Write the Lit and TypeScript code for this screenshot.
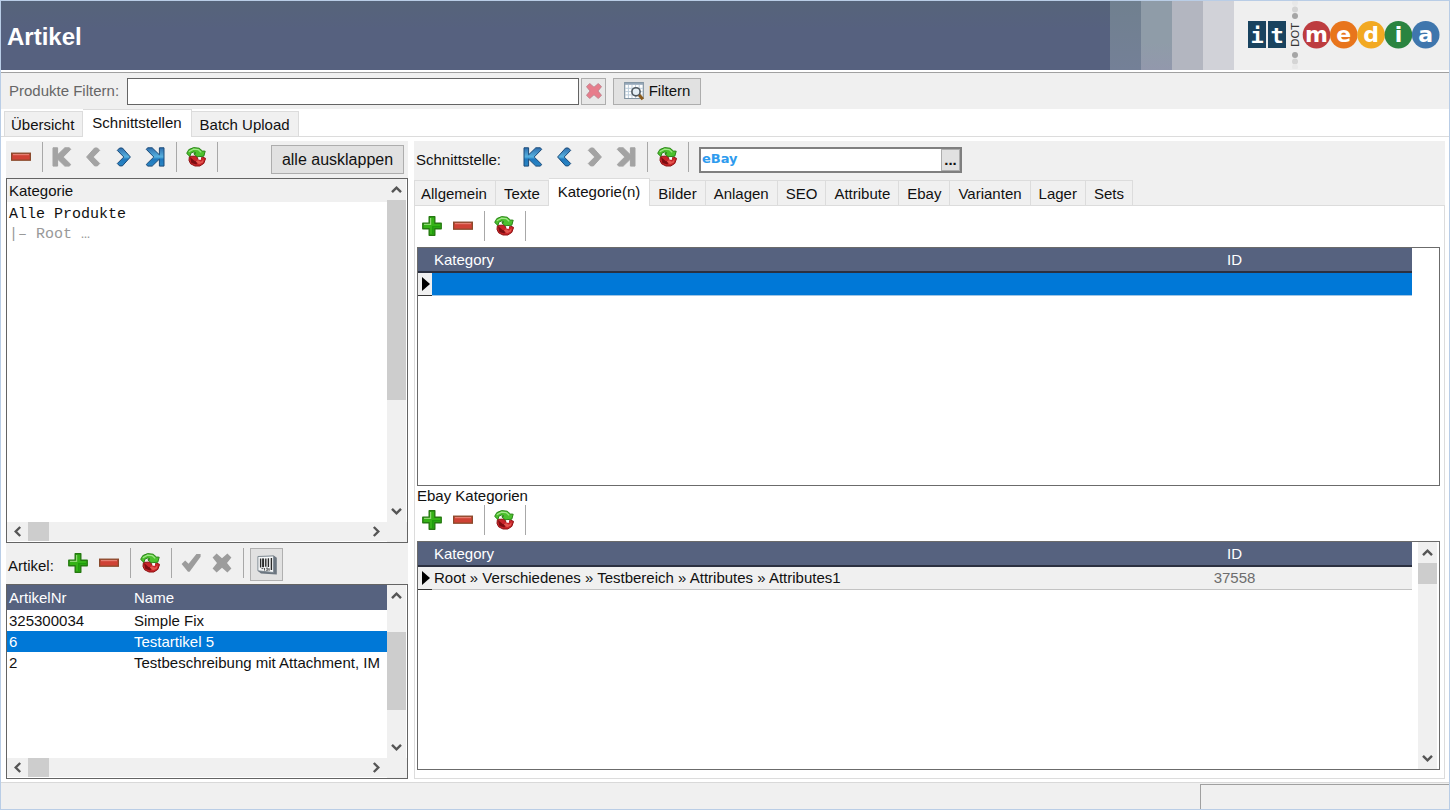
import { LitElement, html, svg, css, TemplateResult } from "lit";
import { customElement, property, state } from "lit/decorators.js";
import { classMap } from "lit/directives/class-map.js";

const icons: Record<string, TemplateResult> = {
  plus: svg`
    <path d="M7.2.8h5.6v6.4h6.4v5.6h-6.4v6.4H7.2v-6.4H.8V7.2h6.4z" fill="#35b317" stroke="#257a10" stroke-width="1.4" stroke-linejoin="round"/>
    <path d="M8.6 2v6.4H2" fill="none" stroke="#8fd873" stroke-width="1.2"/>
    <path d="M10 10h8v1.6h-6.3V18H10z" fill="#1f9d0c"/>`,
  minus: svg`
    <rect x=".6" y="6.2" width="18.8" height="7" fill="#cf4235" stroke="#8a4a2c" stroke-width="1.3"/>
    <path d="M2 7.6h16" stroke="#e57f72" stroke-width="1.2"/>`,
  first: svg`
    <path d="M1 .8h4.6v7L12.8.8h4.6l1.3 1.6L11.2 10l7.5 7.4-1.3 1.7h-4.6l-7.2-7v7H1z" class="nav"/>`,
  prev: svg`<path d="M11.6 1h2.8l2.3 2.4L10.2 10l6.5 6.5-2.3 2.4h-2.8L3.6 10z" class="nav"/>`,
  next: svg`<path d="M8.4 1H5.6L3.3 3.4 9.8 10l-6.5 6.5 2.3 2.4h2.8L16.4 10z" class="nav"/>`,
  last: svg`
    <path d="M19 .8h-4.6v7L7.2.8H2.6L1.3 2.4 8.8 10l-7.5 7.4 1.3 1.7h4.6l7.2-7v7H19z" class="nav"/>`,
  refresh: svg`
    <path d="M3.4 9.4 3 13.4l1.6 3.4 4.4 2.2h4.8l4-2.6 1.8-5-3-1.4-2.8 2.2-2.6-.8V9z" fill="#c8252a" stroke="#8d1212" stroke-linejoin="round"/>
    <path d="m4 10 4.6 4 3.4.2-1.6 3.4-5-1.6z" fill="#7d0c10"/>
    <path d="m9.6 14.4 2.4-1.2 3 1.6 2.6-2.6-.6 3.4-4 1.6z" fill="#e4564f"/>
    <path d="M.7 6.4 2.8 2.6 7.6.6l5.6.6L16.4 4l2.8.2-1.4 5-6.6.6-3.4-3 2.2-.8-2.2-1-2.6.8-1.4 3.6z" fill="#4cc12e" stroke="#2a8417" stroke-linejoin="round"/>
    <path d="m2.8 4.8 4.8-2.6 4.6.4 3 2.8" fill="none" stroke="#a2e68a" stroke-width="1.2"/>
    <path d="M12 10.6h3v2.2h-2.4z" fill="#fff"/>`,
  check: svg`<path d="m.6 11 3.6-3.6 3.4 3.4L15.4.9h4.2v2.8L8.6 18.8H7z" fill="#9c9c9c"/>`,
  cross: svg`<path d="M4.6.6 10 5.2 15.4.6l4 4L15 10l4.4 5.4-4 4L10 14.8l-5.4 4.6-4-4L5 10 .6 4.6z" class="x" stroke-linejoin="round"/>`,
  barcode: svg`
    <path d="M1 1.6 17 .8l2.8 2v16.6L4 18.6 1 16z" fill="#6c7680"/>
    <path d="M.9 1.5 16.6.9v16.6L.9 15.8z" fill="#f6f8f9" stroke="#78838c" stroke-width=".9"/>
    <path d="M3.6 3.4v9M8.8 3.4v8.4M11.4 3.3v8.6M14.4 3v12" stroke="#2a2a2a" stroke-width="1.4"/>
    <path d="M6.1 3.4v8.8" stroke="#2a2a2a" stroke-width="2"/>
    <path d="M4.5 13.6h1.8m1.2-.6v2.6m1.4-2.4h2v2h-2m3.2-2v2.6" stroke="#555" fill="none"/>`,
  table: svg`
    <path d="M.7 1.5h18.6v16H.7z" fill="#fff" stroke="#8293a1" stroke-width="1.2"/>
    <path d="M1 2.8h18" stroke="#93a6b8" stroke-width="2"/>
    <path d="M4.4 4v13M8 4v13M11.6 4v13M15.2 4v13M1 7.3h18M1 10.6h18M1 13.9h18" stroke="#bccddb"/>
    <circle cx="12" cy="10.8" r="4.1" fill="#e4eef5" stroke="#4d565e" stroke-width="1.6"/>
    <path d="m15.2 14 3.6 4.2" stroke="#8b5a1b" stroke-width="3"/>`,
};

const chevrons: Record<string, string> = {
  up: "M1 8.2 5.5 3.7 10 8.2",
  down: "M1 2.8 5.5 7.3 10 2.8",
  left: "M8.2 1 3.7 5.5 8.2 10",
  right: "M2.8 1 7.3 5.5 2.8 10",
};

const base = css`
  * { box-sizing: border-box; }
  button, input { font: inherit; color: inherit; margin: 0; padding: 0; border: 0; border-radius: 0; background: none; outline: none; }
`;

@customElement("ui-icon")
class UiIcon extends LitElement {
  @property() name = "plus";
  @property({ reflect: true }) tone = "normal";
  static styles = css`
    :host { display: block; width: 20px; height: 20px; }
    svg { display: block; width: 20px; height: 20px; }
    .nav { fill: url(#blue); stroke: #1b4a78; stroke-width: 1; stroke-linejoin: round; }
    :host([tone="off"]) .nav { fill: #a3a3a3; stroke: #a3a3a3; stroke-width: 1; }
    .x { fill: #9c9c9c; }
    :host([tone="red"]) .x { fill: #e77d8c; stroke: #b8808a; stroke-width: 1; }
    :host([tone="red"]), :host([tone="red"]) svg { width: 16px; height: 16px; }
  `;
  render() {
    return html`<svg viewBox="0 0 20 20" aria-hidden="true">
      <defs>
        <linearGradient id="blue" x1="0" y1="0" x2="0" y2="1">
          <stop offset="0" stop-color="#2f6fae" /><stop offset=".5" stop-color="#57b2e0" /><stop offset=".62" stop-color="#1f78bd" /><stop offset="1" stop-color="#2b86c4" />
        </linearGradient>
      </defs>
      ${icons[this.name]}
    </svg>`;
  }
}

@customElement("tool-strip")
class ToolStrip extends LitElement {
  /** Icon names in order; "|" is a separator, a leading "-" disables the button. */
  @property() items = "";
  static styles = [base, css`
    :host { display: flex; height: 30px; }
    button { width: 31px; height: 30px; display: grid; place-items: center start; padding-left: 5px; }
    .sep { width: 10px; display: flex; justify-content: center; }
    .sep::before { content: ""; width: 1px; background: #a8a8a8; }
  `];
  private labels: Record<string, string> = {
    plus: "Hinzufügen", minus: "Löschen", first: "Erster", prev: "Zurück", next: "Weiter",
    last: "Letzter", refresh: "Aktualisieren", check: "Speichern", cross: "Abbrechen",
  };
  render() {
    return this.items.split(" ").map((item) => {
      if (item === "|") return html`<span class="sep"></span>`;
      const off = item.startsWith("-");
      const name = off ? item.slice(1) : item;
      return html`<button ?disabled=${off} aria-label=${this.labels[name]}>
        <ui-icon name=${name} tone=${off ? "off" : "normal"}></ui-icon>
      </button>`;
    });
  }
}

@customElement("scroll-track")
class ScrollTrack extends LitElement {
  @property({ reflect: true }) axis = "y";
  @property({ type: Number }) offset = 0;
  @property({ type: Number }) size = 20;
  static styles = [base, css`
    :host { display: flex; background: #f0f0f0; }
    :host([axis="y"]) { flex-direction: column; width: 19px; }
    :host([axis="x"]) { height: 19px; }
    button { flex: none; width: 21px; height: 19px; display: grid; place-items: center; }
    :host([axis="y"]) button { width: 19px; height: 21px; }
    svg { width: 11px; height: 11px; fill: none; stroke: #555; stroke-width: 2.4; }
    .track { flex: 1; min-width: 0; min-height: 0; }
    .thumb { background: #cdcdcd; width: 100%; height: 100%; }
  `];
  private arrow(dir: string) {
    return html`<button aria-label=${dir}><svg viewBox="0 0 11 11"><path d=${chevrons[dir]} /></svg></button>`;
  }
  render() {
    const y = this.axis === "y";
    const pos = y
      ? `margin-top:${this.offset}px;height:${this.size}px`
      : `margin-left:${this.offset}px;width:${this.size}px`;
    return html`${this.arrow(y ? "up" : "left")}
      <div class="track"><div class="thumb" style=${pos}></div></div>
      ${this.arrow(y ? "down" : "right")}`;
  }
}

@customElement("tab-row")
class TabRow extends LitElement {
  @property({ attribute: false }) tabs: string[] = [];
  @state() private picked = "";
  @property() selected = "";
  static styles = [base, css`
    :host { display: flex; align-items: flex-end; height: 28px; border-bottom: 1px solid #dcdcdc; }
    button { height: 25px; padding: 2px 8px 0; border: 1px solid #dcdcdc; border-left-width: 0; border-bottom: 0; background: #f0f0f0; white-space: nowrap; }
    button:first-child { border-left-width: 1px; padding-left: 6px; }
    .on { height: 28px; margin-bottom: -1px; padding: 0 9px 2px; background: #fff; }
  `];
  render() {
    const current = this.picked || this.selected;
    return this.tabs.map((t) => html`<button role="tab" aria-selected=${t === current}
      class=${classMap({ on: t === current })} @click=${() => (this.picked = t)}>${t}</button>`);
  }
}

@customElement("category-grid")
class CategoryGrid extends LitElement {
  @property() category = "";
  @property() number = "";
  @property({ type: Boolean }) active = false;
  @property({ type: Boolean }) scroll = false;
  static styles = [base, css`
    :host { display: flex; min-height: 0; background: #fff; border: 1px solid #6b6b6b; }
    .body { flex: 1; min-width: 0; }
    .pad { width: 27px; display: flex; justify-content: flex-end; padding-right: 2px; }
    table { width: 100%; border-collapse: separate; border-spacing: 0; table-layout: fixed; }
    th { height: 25px; padding: 0; font-weight: 400; color: #fff; background: #56627f; border-bottom: 2px solid #2b3040; text-align: left; }
    td { height: 23px; padding: 0; background: #f0f0f0; border-bottom: 1px solid #c3c3c3; white-space: nowrap; }
    .mark { width: 14px; }
    td.mark { border-bottom-color: #333; }
    .mark svg { display: block; width: 14px; height: 16px; }
    .cat { padding-left: 2px; }
    .id { width: 355px; text-align: center; }
    td.id { color: #6d6d6d; }
    .active .cat, .active .id { background: #0078d7; border-bottom-color: #9fc4e4; }
  `];
  render() {
    return html`<div class="body"><table>
        <thead><tr><th class="mark"></th><th class="cat">Kategory</th><th class="id">ID</th></tr></thead>
        <tbody><tr class=${classMap({ active: this.active })}>
          <td class="mark"><svg viewBox="0 0 14 16"><path d="M4 1v14l8-7z" /></svg></td>
          <td class="cat">${this.category}</td><td class="id">${this.number}</td>
        </tr></tbody>
      </table></div>
      <div class="pad">${this.scroll ? html`<scroll-track axis="y" size="21"></scroll-track>` : ""}</div>`;
  }
}

@customElement("brand-logo")
class BrandLogo extends LitElement {
  static styles = css`
    :host { display: block; width: 194px; height: 68px; }
    svg { display: block; }
    .b { font: bold 22px "DejaVu Sans", sans-serif; fill: #fff; text-anchor: middle; }
    .sq { font: bold 22px "DejaVu Sans Mono", monospace; fill: #fff; text-anchor: middle; }
    .dot { font: 11px "DejaVu Sans", sans-serif; fill: #333; text-anchor: middle; }
  `;
  render() {
    const discs = [["m", "#bd3c3f"], ["e", "#e8751c"], ["d", "#f2a922"], ["i", "#2a8440"], ["a", "#3f76ad"]];
    return html`<svg width="194" height="68" viewBox="0 0 194 68" role="img" aria-label="it dot media">
      <path d="M1 20h18v27H1zM21 20h18v27H21z" fill="#19435f" />
      <text class="sq" x="10" y="42">i</text>
      <text class="sq" x="30" y="42">t</text>
      <circle cx="48" cy="2" r="3" fill="#e8e8e8" /><circle cx="48" cy="8.5" r="3" fill="#d4d4d4" /><circle cx="48" cy="15" r="3" fill="#a5a5a5" />
      <text class="dot" transform="translate(52 34) rotate(-90)">DOT</text>
      <circle cx="48" cy="54" r="3" fill="#a5a5a5" /><circle cx="48" cy="60.5" r="3" fill="#d4d4d4" /><circle cx="48" cy="66" r="3" fill="#e8e8e8" />
      ${discs.map(([c, fill], i) => svg`<circle cx=${69.5 + i * 27.3} cy="33.7" r="13.8" fill=${fill} />
        <text class="b" x=${69.5 + i * 27.3} y="41">${c}</text>`)}
    </svg>`;
  }
}

@customElement("app-root")
class AppRoot extends LitElement {
  private articles = [
    ["325300034", "Simple Fix"],
    ["6", "Testartikel 5"],
    ["2", "Testbeschreibung mit Attachment, IM"],
  ];
  @state() private current = "6";

  static styles = [base, css`
    :host { display: flex; flex-direction: column; height: 100vh; box-sizing: border-box; border: 1px solid #b9cde6; background: #fff; color: #111; font: 15px/20px "Liberation Sans", Arial, sans-serif; overflow: hidden; }
    header { display: flex; height: 69px; flex: none; background: #efefef; }
    h1 { flex: 1; margin: 0; padding: 2px 6px 0; display: flex; align-items: center; font-size: 24px; line-height: 28px; color: #fff; background: linear-gradient(#56647a, #56617f 40%); }
    .band { width: 31px; }
    .b1 { background: linear-gradient(#70808f, #748097); }
    .b2 { background: linear-gradient(#8f9ca8 60%, #9298ac); }
    .b3 { background: #b3b6c0; }
    .b4 { background: #d1d2d8; }
    brand-logo { margin: 0 8px 0 13px; }

    .filter { display: flex; align-items: center; gap: 2px; flex: none; height: 37px; margin-top: 2px; padding: 0 8px; border-top: 1px solid #a0a0a0; background: #f0f0f0; }
    .filter label { margin-right: 6px; color: #666; }
    .filter input { width: 452px; height: 27px; padding: 0 4px; background: #fff; border: 1px solid #646464; }
    .btn { display: flex; align-items: center; justify-content: center; gap: 5px; height: 27px; background: #e1e1e1; border: 1px solid #adadad; }
    .clear { width: 25px; background: #e8e8e8; }
    .find { width: 88px; margin-left: 5px; }

    .top-tabs { flex: none; padding-left: 3px; }
    main { flex: 1; min-height: 0; display: flex; gap: 6px; padding: 4px 4px 3px 5px; }
    .left { width: 402px; flex: none; display: flex; flex-direction: column; background: #f0f0f0; }
    .bar { flex: none; display: flex; align-items: center; justify-content: space-between; height: 37px; padding: 0 4px 6px 0; }
    .expand { width: 133px; height: 29px; margin-top: 6px; font-size: 16px; }
    .box { display: grid; grid-template: 1fr 20px / 1fr 20px; background: #fff; border: 1px solid #646464; }
    .box .view { overflow: hidden; }
    .box .corner { background: #f0f0f0; }
    .tree { flex: 1; min-height: 0; }
    .tree h2 { margin: 0 0 2px; height: 23px; padding: 2px 2px 0; font-size: 15px; font-weight: 400; background: #f0f0f0; }
    .tree ul { margin: 0; padding: 1px 2px; list-style: none; font-family: "Liberation Mono", monospace; }
    .tree .sub { color: #999; }
    .art-bar { flex: none; display: flex; height: 41px; padding: 5px 2px 0; }
    .art-label { width: 55px; padding-top: 8px; white-space: nowrap; }
    .code { width: 33px; height: 33px; margin-left: 2px; border-color: #b0b0b0; }
    .list { height: 195px; }
    table { width: 100%; border-collapse: collapse; table-layout: fixed; }
    th { height: 25px; padding: 0 2px; font-weight: 400; text-align: left; background: #56627f; color: #fff; }
    th:first-child { width: 125px; }
    td { height: 21px; padding: 0 0 0 2px; line-height: 21px; white-space: nowrap; }
    .sel td { background: #0078d7; color: #fff; }

    .right { flex: 1; min-width: 0; display: flex; flex-direction: column; background: #f0f0f0; }
    .right .bar { justify-content: flex-start; padding: 0 2px 5px; }
    .lbl { width: 102px; padding-top: 6px; }
    .combo { display: flex; width: 263px; height: 26px; margin: 6px 0 0 6px; background: #fff; border: 2px solid #7f7f7f; }
    .combo input { flex: 1; min-width: 0; padding: 0 1px 3px; font: bold 13px "DejaVu Sans", sans-serif; color: #2e9bee; }
    .combo button { width: 19px; background: #e1e1e1; border: 1px solid #adadad; font-weight: 700; line-height: 14px; }
    .pane { flex: 1; min-height: 0; display: flex; flex-direction: column; padding: 5px 4px 8px 2px; background: #fff; border: 1px solid #dcdcdc; border-top: 0; }
    .g1 { flex: 240 0 0px; margin-top: 6px; }
    .g2 { flex: 229 0 0px; margin-top: 6px; }
    h3 { margin: 0; font-size: 15px; line-height: 19px; font-weight: 400; }
    footer { flex: none; height: 27px; display: flex; justify-content: flex-end; padding-top: 1px; background: #f0f0f0; border-top: 1px solid #d9d9d9; }
    .status { width: 249px; border: solid #a0a0a0; border-width: 1px 0 0 1px; }
  `];

  render() {
    return html`
      <header>
        <h1>Artikel</h1>
        <span class="band b1"></span><span class="band b2"></span><span class="band b3"></span><span class="band b4"></span>
        <brand-logo></brand-logo>
      </header>
      <div class="filter">
        <label for="q">Produkte Filtern:</label>
        <input id="q" type="text" />
        <button class="btn clear" aria-label="Filter löschen"><ui-icon name="cross" tone="red"></ui-icon></button>
        <button class="btn find"><ui-icon name="table"></ui-icon>Filtern</button>
      </div>
      <tab-row class="top-tabs" role="tablist" .tabs=${["Übersicht", "Schnittstellen", "Batch Upload"]} selected="Schnittstellen"></tab-row>
      <main>
        <section class="left">
          <div class="bar">
            <tool-strip items="minus | -first -prev next last | refresh |"></tool-strip>
            <button class="btn expand">alle ausklappen</button>
          </div>
          <div class="box tree">
            <div class="view">
              <h2>Kategorie</h2>
              <ul><li>Alle Produkte</li><li class="sub">|– Root …</li></ul>
            </div>
            <scroll-track axis="y" size="200"></scroll-track>
            <scroll-track axis="x" size="21"></scroll-track>
            <div class="corner"></div>
          </div>
          <div class="art-bar">
            <span class="art-label">Artikel:</span>
            <tool-strip items="plus minus | refresh | -check -cross |"></tool-strip>
            <button class="btn code" aria-label="Barcode"><ui-icon name="barcode"></ui-icon></button>
          </div>
          <div class="box list">
            <div class="view">
              <table>
                <thead><tr><th>ArtikelNr</th><th>Name</th></tr></thead>
                <tbody>${this.articles.map(([nr, name]) => html`
                  <tr class=${classMap({ sel: nr === this.current })} @click=${() => (this.current = nr)}><td>${nr}</td><td>${name}</td></tr>`)}
                </tbody>
              </table>
            </div>
            <scroll-track axis="y" offset="26" size="78"></scroll-track>
            <scroll-track axis="x" size="21"></scroll-track>
            <div class="corner"></div>
          </div>
        </section>
        <section class="right">
          <div class="bar">
            <label class="lbl" for="port">Schnittstelle:</label>
            <tool-strip items="first prev -next -last | refresh |"></tool-strip>
            <div class="combo"><input id="port" type="text" value="eBay" /><button aria-label="Auswählen">...</button></div>
          </div>
          <tab-row role="tablist" .tabs=${["Allgemein", "Texte", "Kategorie(n)", "Bilder", "Anlagen", "SEO", "Attribute", "Ebay", "Varianten", "Lager", "Sets"]} selected="Kategorie(n)"></tab-row>
          <div class="pane">
            <tool-strip items="plus minus | refresh |"></tool-strip>
            <category-grid class="g1" active></category-grid>
            <h3>Ebay Kategorien</h3>
            <tool-strip items="plus minus | refresh |"></tool-strip>
            <category-grid class="g2" scroll category="Root » Verschiedenes » Testbereich » Attributes » Attributes1" number="37558"></category-grid>
          </div>
        </section>
      </main>
      <footer><div class="status"></div></footer>`;
  }
}
